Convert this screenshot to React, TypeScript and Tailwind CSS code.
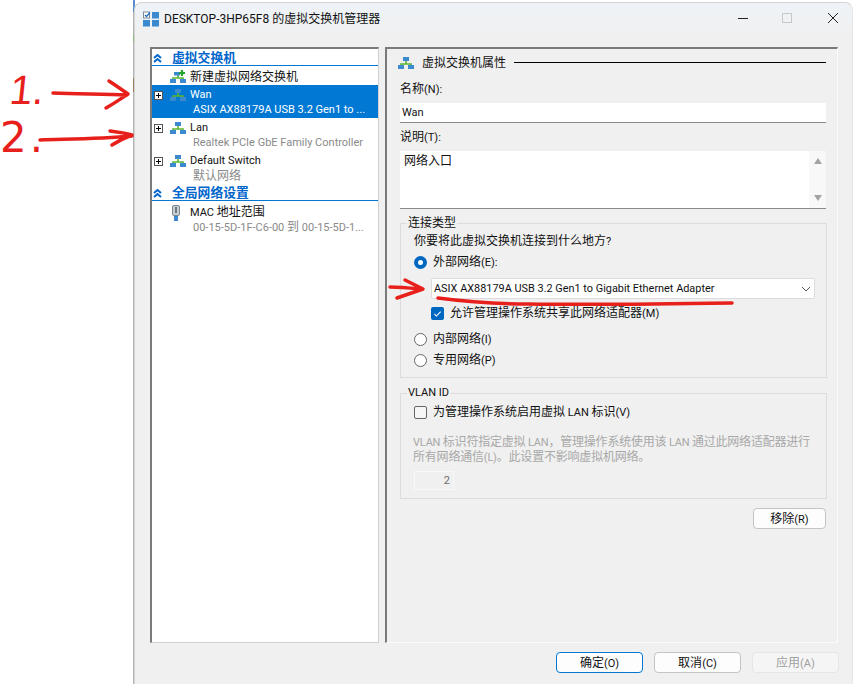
import type { ReactNode } from "react";

const font = "font-['Roboto','Noto_Sans_CJK_SC',sans-serif]";

function Mix({ text }: { text: string }) {
  return (
    <>
      {text.split(/([\x00-\x7f]+)/).map((part, i) =>
        i % 2 ? (
          <span key={i} className="text-[11px]">
            {part}
          </span>
        ) : (
          part
        ),
      )}
    </>
  );
}

function NetIcon({ className = "" }: { className?: string }) {
  return (
    <svg viewBox="0 0 16 12" className={`w-4 h-3 shrink-0 ${className}`}>
      <path d="M8 3v4M3 9V7h10v2" fill="none" stroke="#5cb531" strokeWidth="1.6" />
      <rect x="5" y="0" width="6" height="4" fill="#3b8ad0" />
      <rect x="0" y="8" width="6" height="4" fill="#3b8ad0" />
      <rect x="10" y="8" width="6" height="4" fill="#3b8ad0" />
    </svg>
  );
}

function Expander() {
  return (
    <svg viewBox="0 0 9 9" className="w-[9px] h-[9px] shrink-0 bg-white">
      <rect x="0.5" y="0.5" width="8" height="8" fill="none" stroke="#555" />
      <path d="M2 4.5h5M4.5 2v5" stroke="#000" />
    </svg>
  );
}

function Chevrons() {
  return (
    <svg viewBox="0 0 9 9" className="w-[9px] h-[9px] shrink-0">
      <path d="M1 4l3.5-3L8 4M1 8l3.5-3L8 8" fill="none" stroke="#0066cc" strokeWidth="2" />
    </svg>
  );
}

function SectionHead({ children }: { children: ReactNode }) {
  return (
    <div className="h-[17px] pt-[2px] flex items-center pl-[1px] gap-[10px] border-b border-[#0078d4]">
      <Chevrons />
      <span className="font-bold text-[12.8px] text-[#0066cc]">{children}</span>
    </div>
  );
}

function TreeRow({
  name,
  sub,
  selected,
  latinSub,
}: {
  name: string;
  sub: string;
  selected?: boolean;
  latinSub?: boolean;
}) {
  return (
    <div className={`h-[33px] pt-[2px] ${selected ? "bg-[#0078d4] text-white" : ""}`}>
      <div className="h-[16px] flex items-center pl-[2px]">
        <Expander />
        <NetIcon className="ml-[7px]" />
        <span className="ml-[4px] text-[11px]">{name}</span>
      </div>
      <div
        className={`ml-[41px] h-[14px] leading-[14px] text-[12px] whitespace-nowrap ${latinSub ? "-mt-[1px]" : ""} ${
          selected ? "" : "text-[#8a8a8a]"
        }`}
      >
        <Mix text={sub} />
      </div>
    </div>
  );
}

function Radio({ checked, label }: { checked?: boolean; label: string }) {
  return (
    <div className="h-[16px] flex items-center gap-[6px]">
      <span
        className={`w-[13px] h-[13px] rounded-full shrink-0 bg-white ${
          checked ? "border-[4px] border-[#0067c0]" : "border border-[#666]"
        }`}
      />
      <span className="text-[12px]">
        <Mix text={label} />
      </span>
    </div>
  );
}

function Btn({
  label,
  variant = "normal",
}: {
  label: string;
  variant?: "normal" | "primary" | "disabled";
}) {
  const styles = {
    normal: "bg-[#fdfdfd] border-[#c4c4c4]",
    primary: "bg-[#fdfdfd] border-[#0078d4]",
    disabled: "bg-[#f5f5f5] border-[#e6e6e6] text-[#a0a0a0]",
  };
  return (
    <button className={`w-[87px] h-[21px] rounded-[4px] border text-[12px] leading-none ${styles[variant]}`}>
      <Mix text={label} />
    </button>
  );
}

export default function App() {
  return (
    <div className={`relative w-[855px] h-[684px] overflow-hidden bg-white text-[#111] ${font}`}>
      {/* sliver of the window behind */}
      <div className="absolute left-[133px] top-0 w-[2px] h-[684px] bg-[#b4b4b4]">
        <div className="h-[12px] bg-[#5b8fd0]" />
        <div className="mt-[22px] h-[8px] bg-[#8fb87e]" />
        <div className="mt-[36px] h-[14px] bg-[#9c7f5c]" />
      </div>
      <div className="relative ml-[134px] mt-[2px] w-[719px] h-[682px] rounded-t-[8px] border-t border-l border-r border-[#d4d4d4] border-r-[#e6e6e6] bg-[#f0f0f0] flex flex-col">
        {/* title bar */}
        <div className="h-[32px] shrink-0 rounded-t-[8px] bg-gradient-to-b from-[#eef3f8] to-[#f0f0f0] flex items-center pl-[8px]">
          <svg viewBox="0 0 16 16" className="w-4 h-4 shrink-0">
            <rect x="0.5" y="1" width="6" height="6" fill="#fff" stroke="#7a8a9a" />
            <path d="M2 4l1.5 1.5L7 1.5" fill="none" stroke="#1f6fc0" strokeWidth="1.3" />
            <rect x="9" y="1" width="7" height="6.5" fill="#3b8ad0" />
            <rect x="0" y="9" width="7" height="6.5" fill="#3b8ad0" />
            <rect x="9" y="9" width="7" height="6.5" fill="#3b8ad0" />
          </svg>
          <span className="ml-[5px] text-[12px]">DESKTOP-3HP65F8 的虚拟交换机管理器</span>
          <div className="ml-auto -mt-[2px] flex items-center">
            <span className="w-[10px] h-px bg-[#222] mr-[34px]" />
            <span className="w-[10px] h-[10px] border border-[#c8c8c8] mr-[36px]" />
            <svg viewBox="0 0 10 10" className="w-[10px] h-[10px] mr-[14px]">
              <path d="M0 0l10 10M10 0L0 10" stroke="#222" />
            </svg>
          </div>
        </div>

        <div className="flex-1 flex pt-[12px] pl-[15px]">
          {/* tree */}
          <div className="w-[229px] h-[596px] bg-white border-l-2 border-t-2 border-[#7a7a7a] border-r border-r-[#d0d0d0] border-b border-b-[#d0d0d0]">
            <SectionHead>虚拟交换机</SectionHead>
            <div className="h-[19px] pt-[2px] flex items-center pl-[18px] text-[12px]">
              <svg viewBox="0 0 16 13" className="w-4 h-[13px] shrink-0">
                <path d="M8 4v4M3 10V8h10v2" fill="none" stroke="#5cb531" strokeWidth="1.6" />
                <rect x="4" y="2" width="6" height="3.5" fill="#3b8ad0" />
                <rect x="0" y="9" width="6" height="4" fill="#3b8ad0" />
                <rect x="10" y="9" width="6" height="4" fill="#3b8ad0" />
                <path d="M12 0v6M9 3h6" stroke="#22a32a" strokeWidth="2.2" />
              </svg>
              <span className="ml-[4px]">新建虚拟网络交换机</span>
            </div>
            <TreeRow selected latinSub name="Wan" sub="ASIX AX88179A USB 3.2 Gen1 to ..." />
            <TreeRow latinSub name="Lan" sub="Realtek PCIe GbE Family Controller" />
            <TreeRow name="Default Switch" sub="默认网络" />
            <SectionHead>全局网络设置</SectionHead>
            <div className="mt-[3px] flex pl-[19px]">
              <svg viewBox="0 0 10 16" className="w-[10px] h-4 mt-[1px] shrink-0">
                <rect x="1.5" y="0.5" width="7" height="10" rx="1.5" fill="#c8ced4" stroke="#7b8790" />
                <rect x="4" y="2" width="2" height="6" fill="#6d7a84" />
                <rect x="3" y="11" width="4" height="5" fill="#3b8ad0" />
              </svg>
              <div className="ml-[9px]">
                <div className="h-[16px] leading-[16px] text-[12px]">
                  <Mix text="MAC 地址范围" />
                </div>
                <div className="ml-[3px] h-[15px] leading-[15px] text-[12px] text-[#8a8a8a] whitespace-nowrap">
                  <Mix text="00-15-5D-1F-C6-00 到 00-15-5D-1..." />
                </div>
              </div>
            </div>
          </div>

          {/* properties */}
          <div className="ml-[6px] w-[453px] h-[596px] border-l-2 border-t-2 border-[#7a7a7a] border-r border-r-[#fafafa] border-b border-b-[#fafafa] pl-[13px] pr-[11px]">
            <div className="h-[27px] flex items-center">
              <NetIcon className="-ml-[2px]" />
              <span className="ml-[8px] text-[12px]">虚拟交换机属性</span>
              <span className="ml-[8px] flex-1 h-px bg-black" />
            </div>
            <div className="mt-[4px] h-[18px] leading-[18px] text-[12px]">
              <Mix text="名称(N):" />
            </div>
            <div className="mt-[5px] h-[20px] bg-white border-b border-[#8a8a8a] pl-[2px] text-[11px] leading-[19px]">Wan</div>
            <div className="mt-[5px] h-[18px] leading-[18px] text-[12px]">
              <Mix text="说明(T):" />
            </div>
            <div className="mt-[5px] h-[58px] bg-white border-b border-[#8a8a8a] flex">
              <div className="flex-1 pl-[4px] pt-[1px] text-[12px]">网络入口</div>
              <div className="w-[17px] bg-[#f8f8f8] flex flex-col items-center justify-between py-[7px]">
                <span className="w-0 h-0 border-x-[4px] border-x-transparent border-b-[6px] border-b-[#a3a3a3]" />
                <span className="w-0 h-0 border-x-[4px] border-x-transparent border-t-[6px] border-t-[#a3a3a3]" />
              </div>
            </div>

            <fieldset className="mt-[6px] -mr-px h-[163px] border border-[#dcdcdc] pl-[13px]">
              <legend className="-ml-[7px] px-[1px] text-[12px] leading-[16px]">连接类型</legend>
              <div className="mt-[1px] h-[18px] leading-[18px] text-[12px]">
                <Mix text="你要将此虚拟交换机连接到什么地方?" />
              </div>
              <div className="mt-[4px]">
                <Radio checked label="外部网络(E):" />
              </div>
              <div className="mt-[8px] ml-[17px] mr-[11px] h-[21px] pt-[2px] bg-white border border-[#dcdcdc] rounded-[2px] flex items-center pl-[2px] pr-[3px] text-[10.9px]">
                <span>ASIX AX88179A USB 3.2 Gen1 to Gigabit Ethernet Adapter</span>
                <svg viewBox="0 0 10 6" className="ml-auto -mt-[2px] w-[10px] h-[6px]">
                  <path d="M1 1l4 4 4-4" fill="none" stroke="#555" />
                </svg>
              </div>
              <div className="mt-[6px] ml-[17px] h-[16px] flex items-center gap-[6px] text-[12px]">
                <span className="w-[13px] h-[13px] rounded-[2px] bg-[#0067c0] flex items-center justify-center shrink-0">
                  <svg viewBox="0 0 10 10" className="w-[9px] h-[9px]">
                    <path d="M1.5 5.5l2.3 2.3 4.7-5" fill="none" stroke="#fff" strokeWidth="1.2" />
                  </svg>
                </span>
                <span>
                  <Mix text="允许管理操作系统共享此网络适配器(M)" />
                </span>
              </div>
              <div className="mt-[10px]">
                <Radio label="内部网络(I)" />
              </div>
              <div className="mt-[5px]">
                <Radio label="专用网络(P)" />
              </div>
            </fieldset>

            <fieldset className="mt-[7px] -mr-px h-[114px] border border-[#dcdcdc] pl-[13px]">
              <legend className="-ml-[7px] px-[1px] text-[11px] leading-[16px]">VLAN ID</legend>
              <div className="mt-[3px] h-[16px] flex items-center gap-[6px] text-[12px]">
                <span className="w-[13px] h-[13px] rounded-[2px] bg-[#f6f6f6] border border-[#666] shrink-0" />
                <span>
                  <Mix text="为管理操作系统启用虚拟 LAN 标识(V)" />
                </span>
              </div>
              <p className="mt-[15px] -ml-[1px] w-[410px] text-[12px] leading-[14px] tracking-[-0.2px] text-[#a8a8a8]">
                <Mix text="VLAN 标识符指定虚拟 LAN，管理操作系统使用该 LAN 通过此网络适配器进行" />
                <br />
                <Mix text="所有网络通信(L)。此设置不影响虚拟机网络。" />
              </p>
              <div className="mt-[6px] w-[40px] h-[19px] border border-[#f8f8f8] pr-[3px] text-right text-[11px] leading-[17px] text-[#6d6d6d]">
                2
              </div>
            </fieldset>

            <div className="mt-[9px] flex justify-end">
              <button className="w-[73px] h-[21px] rounded-[4px] border border-[#c4c4c4] bg-[#fdfdfd] text-[12px] leading-none">
                <Mix text="移除(R)" />
              </button>
            </div>
          </div>
        </div>

        {/* footer */}
        <div className="h-[42px] shrink-0 flex justify-end gap-[11px] pr-[13px] pt-[9px]">
          <Btn variant="primary" label="确定(O)" />
          <Btn label="取消(C)" />
          <Btn variant="disabled" label="应用(A)" />
        </div>
      </div>

      {/* red annotations scribbled over the screenshot */}
      <svg viewBox="0 0 855 684" className="absolute inset-0 w-[855px] h-[684px] pointer-events-none">
        <g fill="none" stroke="#e8201c" strokeWidth="3.5" strokeLinecap="round" strokeLinejoin="round">
          <path d="M53 93c25 1 50 1 74 2M109 81c6 4 12 8 19 13-6 4-13 9-22 14" />
          <path d="M40 140c30-1 60-1 92-4M110 131c8 1 15 2 22 4-8 3-14 6-20 10" />
          <path d="M405 280l18 9-26 9M390 287c10 0 20 1 30 2" />
          <path d="M438 298c30 4 60 6 90 6 70 1 140 0 204-1" />
        </g>
      </svg>
      <span className="absolute left-[10px] top-[66px] text-[41px] leading-[48px] text-[#e8201c] font-['Liberation_Sans'] -skew-x-6">
        1.
      </span>
      <span className="absolute left-0 top-[113px] text-[42px] leading-[50px] tracking-[3px] text-[#e8201c] font-['DejaVu_Sans']">
        2.
      </span>
    </div>
  );
}
